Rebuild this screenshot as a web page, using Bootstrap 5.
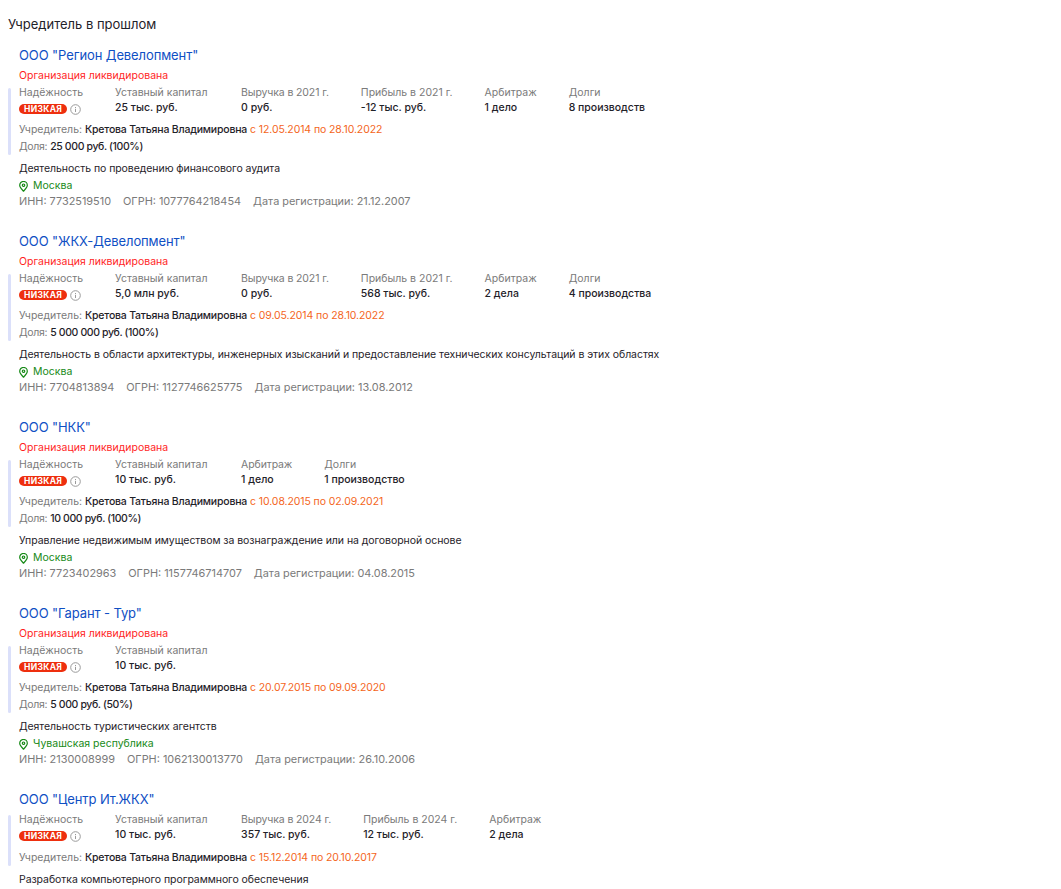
<!DOCTYPE html>
<html lang="ru"><head><meta charset="utf-8"><title>Учредитель в прошлом</title>
<link href="https://cdn.jsdelivr.net/npm/bootstrap@5.3.0/dist/css/bootstrap.min.css" rel="stylesheet">
<style>
body{font-family:Inter,"Liberation Sans",sans-serif;font-size:10.5px;line-height:16px;color:#1f2229;background:#fff}
.page-wrap{padding:14px 0 0 8px}
.sec-title{font-size:13px;line-height:20px;font-weight:400;margin:0 0 11px;color:#1f2229}
.org{margin-bottom:22px;padding-left:11px}
.org-name{display:block;font-size:13px;line-height:20px;letter-spacing:-.1px;color:#0f4fc4;text-decoration:none}
.org-dead{color:#ff1f1f;margin-top:3px;margin-bottom:2px}
.stats-box{position:relative;margin-left:-11px;padding-left:11px}
.stats-box-nostatus{margin-top:4px}
.stats-box-nostatus .founder{margin-top:7px}
.stats-box::before{content:"";position:absolute;left:0;top:2px;bottom:0;width:3px;border-radius:2px;background:#dbe0fa}
.stats{gap:32px}
.stats>div:nth-child(2){min-width:94px}
.stats>div:nth-child(3) .stat-l{letter-spacing:-.12px}
.stat-l{color:#7a7a7a;line-height:14px}
.stat-v{line-height:16px;font-weight:450}
.rate{display:flex;align-items:center;gap:3px;height:12px;margin-top:3px;line-height:12px}
.risk{display:inline-block;background:#ee2f0e;color:#fff;font-size:8.5px;line-height:10px;font-weight:700;padding:0 5px;border-radius:6px;letter-spacing:.3px}
.muted-t{color:#7a7a7a}
.dates{color:#f4651c;letter-spacing:-.1px}
.founder{margin-top:6px}
.share{margin-top:1px}
.share .muted-t{letter-spacing:-.3px}
.strong-t{font-weight:450}
.founder .strong-t{letter-spacing:-.2px}
.share .strong-t{letter-spacing:-.38px}
.activity{margin-top:6px;margin-bottom:1px;letter-spacing:-.06px}
.place{color:#178a17;display:flex;align-items:center;gap:5px}
.ids{gap:12px;color:#7a7a7a;font-size:10.9px;margin-top:-1px}
</style></head><body>
<div class="page-wrap">
<h2 class="sec-title">Учредитель в прошлом</h2>

<div class="org">
<a class="org-name" href="#">ООО "Регион Девелопмент"</a>
<div class="org-dead">Организация ликвидирована</div>
<div class="stats-box">
<div class="d-flex stats">
<div><div class="stat-l">Надёжность</div><div class="rate"><span class="risk">НИЗКАЯ</span><svg width="11" height="11" viewBox="0 0 11 11" fill="none" stroke="#9a9a9a"><circle cx="5.5" cy="5.5" r="4.8"/><path d="M5.5 4.8v3.2M5.5 3v1"/></svg></div></div>
<div><div class="stat-l">Уставный капитал</div><div class="stat-v">25 тыс. руб.</div></div>
<div><div class="stat-l">Выручка в 2021 г.</div><div class="stat-v">0 руб.</div></div>
<div><div class="stat-l">Прибыль в 2021 г.</div><div class="stat-v">-12 тыс. руб.</div></div>
<div><div class="stat-l">Арбитраж</div><div class="stat-v">1 дело</div></div>
<div><div class="stat-l">Долги</div><div class="stat-v">8 производств</div></div>
</div>
<div class="founder"><span class="muted-t">Учредитель:</span> <span class="strong-t">Кретова Татьяна Владимировна</span> <span class="dates">с 12.05.2014 по 28.10.2022</span></div>
<div class="share"><span class="muted-t">Доля:</span> <span class="strong-t">25 000 руб. (100%)</span></div>
</div>
<div class="activity">Деятельность по проведению финансового аудита</div>
<div class="place"><svg width="9" height="11" viewBox="0 0 9 11" fill="none" stroke="#178a17" stroke-width="1.2"><path d="M4.5 10.2C2.5 8 .7 6.3.7 4.2a3.8 3.8 0 0 1 7.6 0c0 2.1-1.8 3.8-3.8 6z"/><circle cx="4.5" cy="4.2" r="1.2"/></svg>Москва</div>
<div class="d-flex ids"><span>ИНН: 7732519510</span><span>ОГРН: 1077764218454</span><span>Дата регистрации: 21.12.2007</span></div>
</div>

<div class="org">
<a class="org-name" href="#">ООО "ЖКХ-Девелопмент"</a>
<div class="org-dead">Организация ликвидирована</div>
<div class="stats-box">
<div class="d-flex stats">
<div><div class="stat-l">Надёжность</div><div class="rate"><span class="risk">НИЗКАЯ</span><svg width="11" height="11" viewBox="0 0 11 11" fill="none" stroke="#9a9a9a"><circle cx="5.5" cy="5.5" r="4.8"/><path d="M5.5 4.8v3.2M5.5 3v1"/></svg></div></div>
<div><div class="stat-l">Уставный капитал</div><div class="stat-v">5,0 млн руб.</div></div>
<div><div class="stat-l">Выручка в 2021 г.</div><div class="stat-v">0 руб.</div></div>
<div><div class="stat-l">Прибыль в 2021 г.</div><div class="stat-v">568 тыс. руб.</div></div>
<div><div class="stat-l">Арбитраж</div><div class="stat-v">2 дела</div></div>
<div><div class="stat-l">Долги</div><div class="stat-v">4 производства</div></div>
</div>
<div class="founder"><span class="muted-t">Учредитель:</span> <span class="strong-t">Кретова Татьяна Владимировна</span> <span class="dates">с 09.05.2014 по 28.10.2022</span></div>
<div class="share"><span class="muted-t">Доля:</span> <span class="strong-t">5 000 000 руб. (100%)</span></div>
</div>
<div class="activity">Деятельность в области архитектуры, инженерных изысканий и предоставление технических консультаций в этих областях</div>
<div class="place"><svg width="9" height="11" viewBox="0 0 9 11" fill="none" stroke="#178a17" stroke-width="1.2"><path d="M4.5 10.2C2.5 8 .7 6.3.7 4.2a3.8 3.8 0 0 1 7.6 0c0 2.1-1.8 3.8-3.8 6z"/><circle cx="4.5" cy="4.2" r="1.2"/></svg>Москва</div>
<div class="d-flex ids"><span>ИНН: 7704813894</span><span>ОГРН: 1127746625775</span><span>Дата регистрации: 13.08.2012</span></div>
</div>

<div class="org">
<a class="org-name" href="#">ООО "НКК"</a>
<div class="org-dead">Организация ликвидирована</div>
<div class="stats-box">
<div class="d-flex stats">
<div><div class="stat-l">Надёжность</div><div class="rate"><span class="risk">НИЗКАЯ</span><svg width="11" height="11" viewBox="0 0 11 11" fill="none" stroke="#9a9a9a"><circle cx="5.5" cy="5.5" r="4.8"/><path d="M5.5 4.8v3.2M5.5 3v1"/></svg></div></div>
<div><div class="stat-l">Уставный капитал</div><div class="stat-v">10 тыс. руб.</div></div>
<div><div class="stat-l">Арбитраж</div><div class="stat-v">1 дело</div></div>
<div><div class="stat-l">Долги</div><div class="stat-v">1 производство</div></div>
</div>
<div class="founder"><span class="muted-t">Учредитель:</span> <span class="strong-t">Кретова Татьяна Владимировна</span> <span class="dates">с 10.08.2015 по 02.09.2021</span></div>
<div class="share"><span class="muted-t">Доля:</span> <span class="strong-t">10 000 руб. (100%)</span></div>
</div>
<div class="activity">Управление недвижимым имуществом за вознаграждение или на договорной основе</div>
<div class="place"><svg width="9" height="11" viewBox="0 0 9 11" fill="none" stroke="#178a17" stroke-width="1.2"><path d="M4.5 10.2C2.5 8 .7 6.3.7 4.2a3.8 3.8 0 0 1 7.6 0c0 2.1-1.8 3.8-3.8 6z"/><circle cx="4.5" cy="4.2" r="1.2"/></svg>Москва</div>
<div class="d-flex ids"><span>ИНН: 7723402963</span><span>ОГРН: 1157746714707</span><span>Дата регистрации: 04.08.2015</span></div>
</div>

<div class="org">
<a class="org-name" href="#">ООО "Гарант - Тур"</a>
<div class="org-dead">Организация ликвидирована</div>
<div class="stats-box">
<div class="d-flex stats">
<div><div class="stat-l">Надёжность</div><div class="rate"><span class="risk">НИЗКАЯ</span><svg width="11" height="11" viewBox="0 0 11 11" fill="none" stroke="#9a9a9a"><circle cx="5.5" cy="5.5" r="4.8"/><path d="M5.5 4.8v3.2M5.5 3v1"/></svg></div></div>
<div><div class="stat-l">Уставный капитал</div><div class="stat-v">10 тыс. руб.</div></div>
</div>
<div class="founder"><span class="muted-t">Учредитель:</span> <span class="strong-t">Кретова Татьяна Владимировна</span> <span class="dates">с 20.07.2015 по 09.09.2020</span></div>
<div class="share"><span class="muted-t">Доля:</span> <span class="strong-t">5 000 руб. (50%)</span></div>
</div>
<div class="activity">Деятельность туристических агентств</div>
<div class="place"><svg width="9" height="11" viewBox="0 0 9 11" fill="none" stroke="#178a17" stroke-width="1.2"><path d="M4.5 10.2C2.5 8 .7 6.3.7 4.2a3.8 3.8 0 0 1 7.6 0c0 2.1-1.8 3.8-3.8 6z"/><circle cx="4.5" cy="4.2" r="1.2"/></svg>Чувашская республика</div>
<div class="d-flex ids"><span>ИНН: 2130008999</span><span>ОГРН: 1062130013770</span><span>Дата регистрации: 26.10.2006</span></div>
</div>

<div class="org">
<a class="org-name" href="#">ООО "Центр Ит.ЖКХ"</a>
<div class="stats-box stats-box-nostatus">
<div class="d-flex stats">
<div><div class="stat-l">Надёжность</div><div class="rate"><span class="risk">НИЗКАЯ</span><svg width="11" height="11" viewBox="0 0 11 11" fill="none" stroke="#9a9a9a"><circle cx="5.5" cy="5.5" r="4.8"/><path d="M5.5 4.8v3.2M5.5 3v1"/></svg></div></div>
<div><div class="stat-l">Уставный капитал</div><div class="stat-v">10 тыс. руб.</div></div>
<div><div class="stat-l">Выручка в 2024 г.</div><div class="stat-v">357 тыс. руб.</div></div>
<div><div class="stat-l">Прибыль в 2024 г.</div><div class="stat-v">12 тыс. руб.</div></div>
<div><div class="stat-l">Арбитраж</div><div class="stat-v">2 дела</div></div>
</div>
<div class="founder"><span class="muted-t">Учредитель:</span> <span class="strong-t">Кретова Татьяна Владимировна</span> <span class="dates">с 15.12.2014 по 20.10.2017</span></div>
</div>
<div class="activity">Разработка компьютерного программного обеспечения</div>
</div>
</div>
</body></html>
